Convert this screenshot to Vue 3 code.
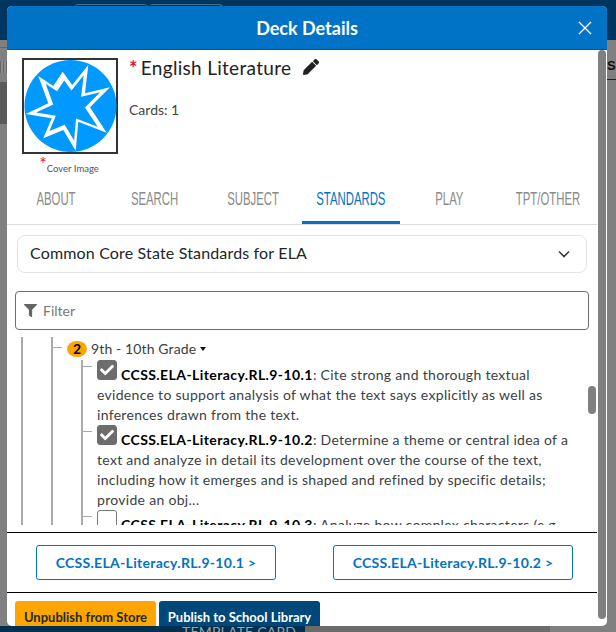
<script setup>
const tabs = ['ABOUT', 'SEARCH', 'SUBJECT', 'STANDARDS', 'PLAY', 'TPT/OTHER']
const outer = '16.3,18 31.3,28 40.7,13.7 50.3,27 66.3,7 63,35.3 88,29.3 68,49.3 84.7,74.7 56.3,63.7 53.7,92.7 41.3,72 21.3,80.3 29.7,60.3 3.7,56 26.3,45.3'
const check = 'M173.898 439.404l-166.4-166.4c-9.997-9.997-9.997-26.206 0-36.204l36.203-36.204c9.997-10 26.207-10 36.204 0L192 312.69 432.095 72.596c9.997-9.997 26.207-9.997 36.204 0l36.203 36.204c9.997 9.997 9.997 26.206 0 36.204l-294.4 294.401c-9.998 9.997-26.207 9.997-36.204-.001z'
</script>

<template>
  <div class="page">
    <div class="bg-top"><div class="bg-pill"></div></div>
    <div class="bg-line"></div>
    <div class="bg-grid"></div>
    <div class="bg-band"></div>
    <div class="bg-se">SE</div>
    <div class="bg-bottom"></div>
    <div class="bg-bottom2"></div>
    <div class="bg-template">TEMPLATE CARD</div>

    <section class="modal">
      <header class="head">
        <h1>Deck Details</h1>
        <svg class="close" viewBox="0 0 16 16"><path d="M2 2l12 12M14 2L2 14" stroke="#fff" stroke-width="1.4" fill="none"/></svg>
      </header>
      <div class="scrollbar"></div>
      <div class="body">
        <div class="deck">
          <div class="cover-col">
            <svg class="cover" viewBox="0 0 96 96">
              <rect x="1" y="1" width="94" height="94" fill="#fff" stroke="#333" stroke-width="2"/>
              <circle cx="48.5" cy="48" r="46" fill="#0099ff"/>
              <polygon :points="outer" fill="#fff"/>
              <polygon :points="outer" fill="#0099ff" transform="translate(47 50) scale(.76) translate(-47 -50)"/>
            </svg>
            <div class="cover-label"><span class="req">*</span>Cover Image</div>
          </div>
          <div class="deck-info">
            <div class="title">
              <span class="req-big">*</span>
              <span>English Literature</span>
              <svg class="pencil" viewBox="0 0 512 512"><path fill="#222" d="M497.9 142.1l-46.1 46.1c-4.7 4.7-12.3 4.7-17 0l-111-111c-4.7-4.7-4.7-12.3 0-17l46.1-46.1c18.7-18.7 49.1-18.7 67.9 0l60.1 60.1c18.8 18.7 18.8 49.1 0 67.9zM284.2 99.8L21.6 362.4.4 483.9c-2.9 16.4 11.4 30.6 27.8 27.8l121.5-21.3 262.6-262.6c4.7-4.7 4.7-12.3 0-17l-111-111c-4.8-4.7-12.4-4.7-17.1 0z"/></svg>
            </div>
            <div class="cards">Cards: 1</div>
          </div>
        </div>

        <nav class="tabs">
          <div v-for="t in tabs" :key="t" class="tab" :class="{ active: t === 'STANDARDS' }"><span>{{ t }}</span></div>
        </nav>

        <div class="select">
          <span class="select-text">Common Core State Standards for ELA</span>
          <svg class="chev" viewBox="0 0 12 8"><path d="M1 1.5l5 5 5-5" fill="none" stroke="#343a40" stroke-width="1.6"/></svg>
        </div>

        <div class="filter">
          <svg class="funnel" viewBox="0 0 512 512"><path fill="#666" d="M487.976 0H24.028C2.71 0-8.047 25.866 7.058 40.971L192 225.941V432c0 7.831 3.821 15.17 10.237 19.662l80 55.98C298.02 518.69 320 507.493 320 487.98V225.941l184.947-184.97C520.021 25.896 509.338 0 487.976 0z"/></svg>
          <span>Filter</span>
        </div>

        <div class="tree">
          <div class="lvl1">
            <div class="lvl2">
              <div class="grade">
                <span class="badge">2</span>
                <span>9th - 10th Grade</span>
                <i class="caret"></i>
              </div>
              <div class="lvl3">
                <div class="item i1">
                  <span class="box on"><svg viewBox="0 0 512 512"><path fill="#fff" :d="check"/></svg></span>
                  <b>CCSS.ELA-Literacy.RL.9-10.1</b>: Cite strong and thorough textual<br>evidence to support analysis of what the text says explicitly as well as<br>inferences drawn from the text.
                </div>
                <div class="item i2">
                  <span class="box on"><svg viewBox="0 0 512 512"><path fill="#fff" :d="check"/></svg></span>
                  <b>CCSS.ELA-Literacy.RL.9-10.2</b>: Determine a theme or central idea of a<br>text and analyze in detail its development over the course of the text,<br>including how it emerges and is shaped and refined by specific details;<br>provide an obj...
                </div>
                <div class="item i3">
                  <span class="box"></span>
                  <b>CCSS.ELA-Literacy.RL.9-10.3</b>: Analyze how complex characters (e.g.
                </div>
              </div>
            </div>
          </div>
          <div class="thumb"></div>
        </div>

        <div class="picks">
          <button class="pick">CCSS.ELA-Literacy.RL.9-10.1 &gt;</button>
          <button class="pick">CCSS.ELA-Literacy.RL.9-10.2 &gt;</button>
        </div>

        <div class="actions">
          <button class="btn orange">Unpublish from Store</button>
          <button class="btn navy">Publish to School Library</button>
        </div>
      </div>
    </section>
  </div>
</template>

<style>
html, body { margin: 0; padding: 0; overflow: hidden; }
</style>

<style scoped>
.page {
  position: relative;
  width: 616px;
  height: 632px;
  overflow: hidden;
  background: #808080;
  font-family: Lato, "Open Sans", sans-serif;
  color: #212529;
}
.bg-top { position: absolute; left: 0; top: 0; width: 616px; height: 40px; background: #00355f; }
.bg-pill { position: absolute; left: 73px; top: 4px; width: 74px; height: 30px; border: 1px solid #4a6a85; border-radius: 5px; box-shadow: 74px 0 0 -1px #00355f, 75px 0 0 0 #4a6a85; }
.bg-line { position: absolute; left: 0; top: 47px; width: 7px; height: 1px; background: #666; }
.bg-grid {
  position: absolute; left: 0; top: 61px; width: 7px; height: 12px;
  background: repeating-linear-gradient(90deg, #666 0 1px, #8c8c8c 1px 3px);
}
.bg-band { position: absolute; left: 0; top: 82px; width: 7px; height: 42px; background: #5a5a5a; }
.bg-se { position: absolute; left: 607px; top: 58px; width: 9px; padding-bottom: 6px; overflow: hidden; border-bottom: 1px solid #222; font: 700 13px "Liberation Sans", sans-serif; color: #111; }
.bg-bottom { position: absolute; left: 0; top: 626px; width: 305px; height: 6px; background: #00304f; }
.bg-bottom2 { position: absolute; left: 305px; top: 626px; width: 245px; height: 6px; background: #6b6b6b; }
.bg-template { position: absolute; left: 182px; top: 623px; font: 14px Lato, sans-serif; letter-spacing: .2px; color: #98a2a8; }

.modal {
  position: absolute;
  left: 7px;
  top: 6px;
  width: 600px;
  height: 620px;
  background: #fff;
  border-radius: 5px;
  overflow: hidden;
  display: flex;
  flex-direction: column;
}
.head {
  height: 44px;
  flex: none;
  box-sizing: border-box;
  background: #0073c6;
  border-bottom: 1px solid #005a9c;
  display: flex;
  align-items: center;
  justify-content: center;
  position: relative;
}
.head h1 { margin: 0; font-size: 18px; font-weight: 700; color: #fff; }
.close { position: absolute; right: 14px; top: 14px; width: 16px; height: 16px; }
.scrollbar { position: absolute; left: 591px; top: 44px; width: 8px; height: 569px; border-radius: 4px; background: #808080; }
.body { width: 590px; display: flex; flex-direction: column; flex: 1; min-height: 0; }
.body > * { flex: none; }

.deck { display: flex; height: 125px; padding: 8px 0 0 15px; box-sizing: border-box; }
.cover-col { width: 96px; flex: none; }
.cover { display: block; width: 96px; height: 96px; }
.cover-label { font-size: 9.5px; margin-top: 5px; text-align: center; color: #555; white-space: nowrap; padding-right: 2px; }
.req { color: #dc143c; font-size: 18px; line-height: 9px; vertical-align: 2px; }
.deck-info { margin-left: 11px; }
.title { display: flex; align-items: center; font-size: 19px; letter-spacing: .3px; height: 22px; margin-top: -2px; color: #222; }
.req-big { color: #dc143c; margin-right: 3px; font-size: 20px; font-weight: 700; position: relative; top: 1px; }
.pencil { width: 16px; height: 16px; margin-left: 12px; }
.cards { font-size: 14px; margin-top: 23px; color: #444; }

.tabs { display: flex; height: 50px; box-sizing: border-box; border-bottom: 1px solid #ddd; }
.tab {
  flex: 1 1 0;
  min-width: 0;
  display: flex;
  justify-content: center;
  font-family: "Liberation Sans Narrow", "Liberation Sans", sans-serif;
  font-size: 18px;
  line-height: 48px;
  color: #8a8a8a;
  height: 49px;
  box-sizing: border-box;
}
.tab span { flex: none; transform: scaleX(.63); white-space: nowrap; }
.tab.active { color: #0073c6; border-bottom: 3px solid #0073c6; }

.select {
  margin: 10px 10px 0;
  height: 38px;
  box-sizing: border-box;
  border: 1px solid #e3e3e3;
  border-radius: 8px;
  display: flex;
  align-items: center;
  justify-content: space-between;
  padding: 0 16px 0 12px;
  font-size: 16px;
  letter-spacing: .16px;
}
.select-text { margin-bottom: 3px; }
.chev { width: 12px; height: 8px; }
.filter {
  margin: 18px 8px 0;
  height: 39px;
  box-sizing: border-box;
  border: 1px solid #6c6c6c;
  border-radius: 4px;
  display: flex;
  align-items: center;
  padding-left: 8px;
  font-size: 14px;
  color: #777;
  width: 574px;
}
.funnel { width: 13px; height: 13px; margin-right: 6px; }

.tree {
  margin-top: 7px;
  height: 188px;
  overflow: hidden;
  position: relative;
  font-size: 14px;
  line-height: 20px;
  color: #3b3f44;
  letter-spacing: .3px;
}
.thumb { position: absolute; left: 581px; top: 49px; width: 8px; height: 28px; border-radius: 4px; background: #808080; }
.lvl1 { margin-left: 14px; border-left: 2px solid #aaa; padding-left: 28px; height: 188px; }
.lvl2 { border-left: 2px solid #aaa; height: 188px; position: relative; }
.lvl2::before { content: ""; position: absolute; left: 0; top: 10px; width: 9px; height: 1px; background: #aaa; }
.grade { display: flex; align-items: center; height: 23px; position: absolute; left: 14px; top: 0; white-space: nowrap; letter-spacing: .12px; }
.badge {
  width: 20px; height: 16px; border-radius: 50%;
  background: #ffa500; color: #000; font-weight: 700; font-size: 14px; line-height: 16px;
  text-align: center; margin-right: 4px; letter-spacing: 0;
}
.caret { border: 3px solid transparent; border-top: 4px solid #111; border-bottom: 0; margin-left: 4px; }
.lvl3 { position: absolute; left: 28px; top: 23px; width: 500px; height: 170px; border-left: 2px solid #aaa; }
.item { position: relative; padding: 5px 0 0 14px; white-space: nowrap; }
.item::before { content: ""; position: absolute; left: 0; top: 6px; width: 9px; height: 1px; background: #aaa; }
.item b { color: #000; letter-spacing: .42px; }
.box {
  display: inline-block; width: 20px; height: 20px; box-sizing: border-box;
  margin: -5px 4px 0 0; vertical-align: top; border-radius: 3px; border: 1px solid #777; background: #fff;
}
.box.on { background: #6d6d6d; border-color: #6d6d6d; padding: 2px; }
.box svg { display: block; width: 14px; height: 14px; }

.picks {
  margin-top: 7px;
  height: 61px;
  box-sizing: border-box;
  border-top: 1px solid #000;
  border-bottom: 1px solid #000;
  display: flex;
  justify-content: space-between;
  align-items: flex-start;
  padding: 12px 24px 0 29px;
}
.pick {
  width: 240px; height: 35px;
  background: #fff; border: 1px solid #0073c6; border-radius: 3px;
  color: #0073c6; font: 700 14px Lato, sans-serif; letter-spacing: .3px;
}
.actions { display: flex; gap: 3px; padding: 8px 0 0 8px; }
.btn { height: 32px; border: 0; border-radius: 3px 3px 0 0; font: 700 13px Lato, sans-serif; padding: 0; }
.orange { width: 141px; background: #ffa500; color: #1d2a20; }
.navy { width: 161px; background: #00477a; color: #fff; }
</style>
